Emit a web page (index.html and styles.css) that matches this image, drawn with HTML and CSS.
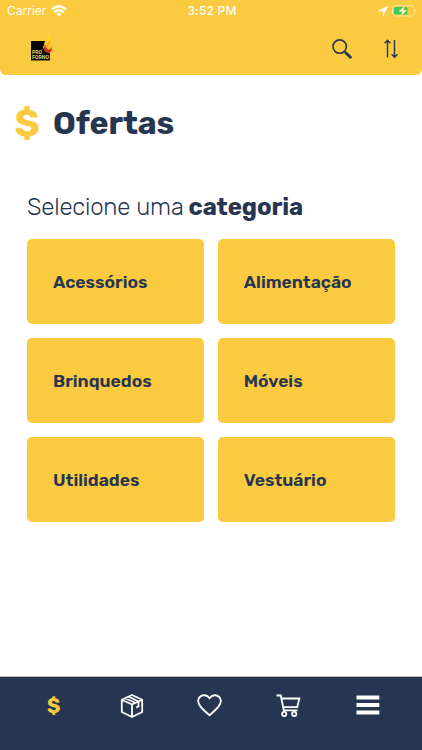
FILE: index.html
```html
<!DOCTYPE html>
<html lang="pt-BR">
<head>
<meta charset="utf-8">
<title>Ofertas</title>
<link rel="stylesheet" href="styles.css">
</head>
<body>
<div class="app">
  <header class="header">
    <div class="status">
      <div class="carrier"><span>Carrier</span>
        <svg width="16" height="12" viewBox="0 0 16 12" fill="none" stroke="#fffdf2" stroke-width="2.3"><path d="M1 4.4Q8-1.8 15 4.4M3.4 7.2Q8 3.2 12.6 7.2"/><path d="M5.4 8.8Q8 6.7 10.6 8.8L8 11.6Z" fill="#fffdf2" stroke="none"/></svg>
      </div>
      <span class="time">3:52 PM</span>
      <div class="power">
        <svg width="10" height="10" viewBox="0 0 10 10"><path d="M0 5L10 0L5.2 10V5Z" fill="#fffdf2" stroke="#fffdf2" stroke-width=".5"/></svg>
        <svg width="25" height="12" viewBox="0 0 25 12"><rect x=".5" y=".5" width="21.5" height="10.5" rx="3" fill="none" stroke="#fde6a0"/><rect x="2" y="2" width="13.5" height="7.5" rx="1.5" fill="#35cd59"/><path d="M23 4Q25 5.7 23 7.6Z" fill="#fde6a0"/><path d="M12.8.8L6.7 6.4H10.2L8.8 11L15 5.3H11.5Z" fill="#fffdf2" stroke="#facb40" stroke-width=".5"/></svg>
      </div>
    </div>
    <div class="toolbar">
      <svg class="logo" width="23" height="27" viewBox="0 0 23 27"><path d="M0 7H14L12 14L19 19V26.5H0Z" fill="#080604"/><path d="M19 1C18 5 13 9 13 13C13 17 15 19 18 18C22 17 22 14 20 12L18 15C16 12 21 8 19 1Z" fill="#f5a91f"/><path d="M19 1C20 5 17 8 15 10Q18 6 19 1Z" fill="#fff000" stroke="#ffe31a" stroke-width="1"/><path d="M14 11C12 15 14 19.5 18 19Q22 17 20.5 14L18 16Q15 15 14 11Z" fill="#c92f17"/><text class="logo-text" x="1" y="20.4" textLength="10" lengthAdjust="spacingAndGlyphs">PRO</text><text class="logo-text" x="1" y="25.4" textLength="17" lengthAdjust="spacingAndGlyphs">FORNO</text></svg>
      <div class="actions">
        <svg width="21" height="21" viewBox="0 0 21 21" fill="none" stroke="#273550"><circle cx="7.7" cy="7.6" r="6.7" stroke-width="1.6"/><path d="M12.4 12.3L14.5 14.4" stroke-width="1.5"/><path d="M14 14L18.4 18.2" stroke-width="2.9" stroke-linecap="round"/></svg>
        <svg width="14" height="20" viewBox="0 0 14 20" fill="none" stroke="#273550" stroke-width="1.4"><path d="M3.5 18.5V1.5M.6 4.3L3.5 1.3L6.4 4.3M10.5 1V18M7.6 15.3L10.5 18.3L13.4 15.3"/></svg>
      </div>
    </div>
  </header>
  <main class="content">
    <h1 class="title"><span class="dollar">$</span><span class="title-text">Ofertas</span></h1>
    <h2 class="subtitle"><span class="light">Selecione uma</span><strong>categoria</strong></h2>
    <div class="grid">
      <div class="card">Acessórios</div>
      <div class="card">Alimentação</div>
      <div class="card">Brinquedos</div>
      <div class="card">Móveis</div>
      <div class="card">Utilidades</div>
      <div class="card">Vestuário</div>
    </div>
  </main>
  <nav class="nav">
    <span class="nav-dollar">$</span>
    <svg width="24" height="24" viewBox="0 0 24 24" fill="none" stroke="#fff" stroke-width="1.8" stroke-linejoin="round"><path d="M1.8 5.8L12 1L22.2 5.8V18L12 23L1.8 18ZM1.8 5.8L12 10.5L22.2 5.8M12 10.5V23M5.2 4.2L15.8 9M8.8 2.6L18.5 7.5V12.5L16.2 13.5"/></svg>
    <svg width="25" height="23" viewBox="0 0 25 23" fill="none" stroke="#fff" stroke-width="1.9" stroke-linejoin="round"><path d="M12.5 21.2C10 19 6.5 16.2 3.7 12.8C.7 9.2.5 5.3 2.8 3C5.7.2 10 .8 12.5 4.3C15 .8 19.3.2 22.2 3C24.5 5.3 24.3 9.2 21.3 12.8C18.5 16.2 15 19 12.5 21.2Z"/></svg>
    <svg width="25" height="24" viewBox="0 0 25 24" fill="none" stroke="#fff" stroke-width="1.8"><path d="M.5 1.5H4.8L7.8 16.3H21.5M5.6 4.5H23.4L21.2 13.2H7.5"/><circle cx="8.2" cy="20" r="2.1"/><circle cx="18.2" cy="20" r="2.1"/></svg>
    <svg width="24" height="22" viewBox="0 0 24 22" fill="#fff"><path d="M.5 1.5H23.3V5.5H.5ZM.5 9H23.3V13H.5ZM.5 16.5H23.3V20.5H.5Z"/></svg>
  </nav>
</div>
</body>
</html>
```
FILE: styles.css
```css
* { box-sizing: border-box; }
body { margin: 0; background: #fff; color: #273550; font-family: Rubik, Roboto, sans-serif; }
svg { display: block; flex: none; }
.app { height: 750px; display: flex; flex-direction: column; overflow: hidden; }
.header { height: 74.5px; flex: none; background: #facb40; border-radius: 0 0 6px 6px; }
.status { height: 22px; display: grid; grid-template-columns: 1fr auto 1fr; align-items: center; padding: 0 5px 0 7px; font: 12px/22px Inter, sans-serif; color: #fffdf2; }
.carrier { display: flex; align-items: center; gap: 5px; }
.time { font-weight: 500; letter-spacing: .2px; }
.power { display: flex; justify-content: flex-end; align-items: center; gap: 4px; }
.toolbar { display: flex; justify-content: space-between; padding: 12px 24px 0 31px; }
.logo-text { font: 700 5.6px Roboto, sans-serif; fill: #e9cf80; }
.actions { display: flex; gap: 31px; padding-top: 5px; }
.content { flex: 1; padding: 0 27px; }
.title { display: flex; align-items: center; height: 48px; margin: 24px 0 0 -12.5px; font-size: 32px; line-height: 48px; font-weight: 700; }
.dollar { width: 38.5px; font: 700 38px/48px Rubik, Roboto, sans-serif; color: #facb40; }
.title-text { letter-spacing: -.1px; }
.subtitle { display: flex; gap: 5px; margin: 44px 0 0; height: 32px; font-size: 24px; line-height: 32px; white-space: nowrap; }
.light { font-weight: 300; letter-spacing: -.2px; }
.subtitle strong { font-weight: 700; letter-spacing: -.1px; }
.grid { display: grid; grid-template-columns: 1fr 1fr; grid-auto-rows: 85.5px; gap: 13.5px; margin-top: 16px; }
.card { display: flex; align-items: center; padding: 1px 26px 0; background: #facb40; border-radius: 5px; font-size: 17.5px; font-weight: 600; }
.nav { height: 74.5px; flex: none; display: grid; grid-template-columns: 73px 77px 79px 80px 24px; align-items: start; padding: 17px 0 0 47px; background: #273650; border-top: 1px solid #b8bdb8; }
.nav-dollar { width: 14px; font: 700 20px/24px Rubik, Roboto, sans-serif; color: #facb40; }
```
